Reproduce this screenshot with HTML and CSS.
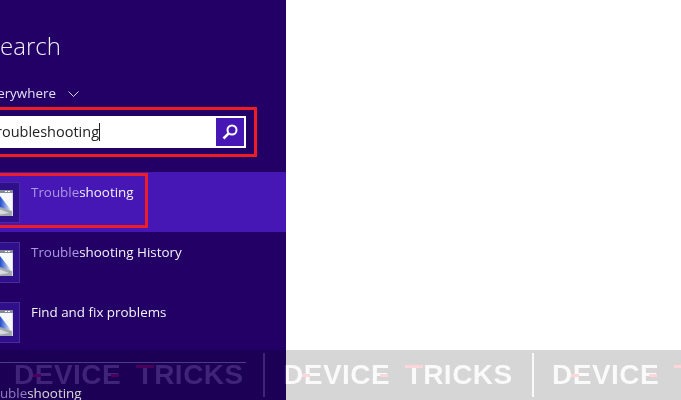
FILE: index.html
```html
<!DOCTYPE html>
<html lang="en">
<head>
    <meta charset="UTF-8">
    <title>Search</title>
    <link rel="stylesheet" href="styles.css">
</head>
<body>
    <svg class="defs" width="0" height="0">
        <defs>
            <linearGradient id="screen" x1="0" y1="0" x2="1" y2="0">
                <stop offset="0" stop-color="#0a28b0"/>
                <stop offset="0.55" stop-color="#2c56d0"/>
                <stop offset="1" stop-color="#e8eefa"/>
            </linearGradient>
        </defs>
        <symbol id="app" viewBox="0 0 26 26">
            <rect x="0" y="0" width="26" height="26" fill="#d9dce2"/>
            <rect x="0" y="0" width="26" height="3" fill="#858b98"/>
            <rect x="18" y="1" width="2" height="1" fill="#fff"/>
            <rect x="21" y="1" width="2" height="1" fill="#fff"/>
            <rect x="1" y="3" width="24" height="18" fill="#f6f8fc"/>
            <path d="M1 6 L13 6 L24 20 L1 20 Z" fill="url(#screen)"/>
            <path d="M1 20 L10 16 L25 21 L25 26 L1 26 Z" fill="#a3a7ae"/>
            <path d="M4 22 L12 19 L22 23 L10 25 Z" fill="#d8dade"/>
        </symbol>
    </svg>

    <div class="panel">
        <h1 class="title">Search</h1>
        <div class="scope">
            <span>Everywhere</span>
            <svg class="chevron" width="11" height="6" viewBox="0 0 11 6"><path d="M0.5 0.5 L5.5 5.5 L10.5 0.5" fill="none" stroke="#d8d0ee" stroke-width="1"/></svg>
        </div>
        <div class="search-frame">
            <div class="search-box">
                <span class="search-text">Troubleshooting</span>
                <span class="search-btn">
                    <svg width="18" height="18" viewBox="0 0 18 18"><circle cx="11" cy="7" r="4.5" fill="none" stroke="#fff" stroke-width="2"/><path d="M7.6 10.4 L2.5 15.5" stroke="#fff" stroke-width="2.6"/></svg>
                </span>
            </div>
        </div>
        <ul class="results">
            <li class="result result-active">
                <span class="thumb"><svg width="26" height="26"><use href="#app"/></svg></span>
                <span class="label"><em>Trouble</em>shooting</span>
                <span class="marker"></span>
            </li>
            <li class="result">
                <span class="thumb"><svg width="26" height="26"><use href="#app"/></svg></span>
                <span class="label"><em>Trouble</em>shooting History</span>
            </li>
            <li class="result">
                <span class="thumb"><svg width="26" height="26"><use href="#app"/></svg></span>
                <span class="label">Find and fix problems</span>
            </li>
        </ul>
        <div class="more"><em>Trouble</em>shooting</div>
    </div>

    <div class="watermark">
        <div class="brand">DEVICE TRICKS<i class="bar bar-e1"></i><i class="bar bar-e2"></i><i class="bar bar-t"></i></div>
        <div class="brand">DEVICE TRICKS<i class="bar bar-e1"></i><i class="bar bar-e2"></i><i class="bar bar-t"></i></div>
        <div class="brand">DEVICE TRICKS<i class="bar bar-e1"></i><i class="bar bar-e2"></i><i class="bar bar-t"></i></div>
    </div>
</body>
</html>
```

FILE: styles.css
```css
html, body {
    margin: 0;
    height: 100%;
    background: #fff;
    overflow: hidden;
}
body {
    font-family: "Open Sans", "Noto Sans", sans-serif;
}
.defs {
    display: block;
}
.panel {
    width: 286px;
    height: 400px;
    background: #220066;
    color: #fff;
    overflow: hidden;
}
.title {
    margin: 29px 0 0 -13px;
    font-size: 24px;
    line-height: 34px;
    font-weight: 300;
    color: #f2effa;
}
.scope {
    display: flex;
    align-items: center;
    gap: 12px;
    margin: 20px 0 0 -17px;
    font-size: 13.4px;
    line-height: 20px;
    color: #e4dff4;
}
.chevron {
    margin-top: 2px;
}
.search-frame {
    width: 249px;
    height: 38px;
    margin: 4px 0 0 -6px;
    padding: 6px 8px 0 0;
    border: 3px solid #ee1c25;
}
.search-box {
    display: flex;
    justify-content: space-between;
    align-items: center;
    height: 32px;
    padding-right: 2px;
    background: #fff;
    color: #222;
    font-size: 14.5px;
}
.search-text {
    border-right: 1px solid #222;
    line-height: 18px;
    margin-left: -9px;
}
.search-btn {
    display: flex;
    align-items: center;
    justify-content: center;
    width: 28px;
    height: 28px;
    background: #4617b4;
}
.results {
    list-style: none;
    margin: 15px 0 0;
    padding: 0;
}
.result {
    position: relative;
    display: flex;
    gap: 11px;
    height: 60px;
    padding: 10px 0 0 0;
    margin-left: -20px;
    box-sizing: border-box;
    font-size: 13.4px;
    line-height: 20px;
    color: #f4f2fb;
}
.result-active {
    background: #4617b4;
}
.thumb {
    display: flex;
    align-items: center;
    justify-content: center;
    flex: none;
    width: 38px;
    height: 39px;
    background: #2f0f8a;
    border: 1px solid #4a2aa0;
}
.label em, .more em {
    font-style: normal;
    color: #ab97e2;
}
.marker {
    position: absolute;
    left: 0;
    top: 1px;
    width: 162px;
    height: 49px;
    border: 3px solid #ee1c25;
}
.more {
    margin: 10px 0 0 -21px;
    padding-top: 20px;
    width: 267px;
    border-top: 1px solid #5a4a9a;
    font-size: 13.4px;
    line-height: 20px;
}
.watermark {
    position: absolute;
    left: 0;
    right: 0;
    bottom: 0;
    height: 50px;
    display: flex;
    align-items: center;
    overflow: hidden;
    background: rgba(0, 0, 0, 0.16);
}
.brand {
    position: relative;
    flex: none;
    box-sizing: border-box;
    width: 265px;
    margin-right: 4px;
    padding-left: 14px;
    border-right: 2px solid #242424;
    line-height: 44px;
    font-family: "Liberation Sans", sans-serif;
    font-weight: 700;
    font-size: 28px;
    letter-spacing: 0.5px;
    word-spacing: 7px;
    color: #242424;
    white-space: nowrap;
    mix-blend-mode: plus-lighter;
}
.bar {
    position: absolute;
    background: #300006;
}
.bar-e1 {
    left: 33px;
    top: 21px;
    width: 8px;
    height: 3px;
}
.bar-e2 {
    left: 111px;
    top: 21px;
    width: 8px;
    height: 3px;
}
.bar-t {
    left: 136px;
    top: 12px;
    width: 18px;
    height: 3px;
}
```
